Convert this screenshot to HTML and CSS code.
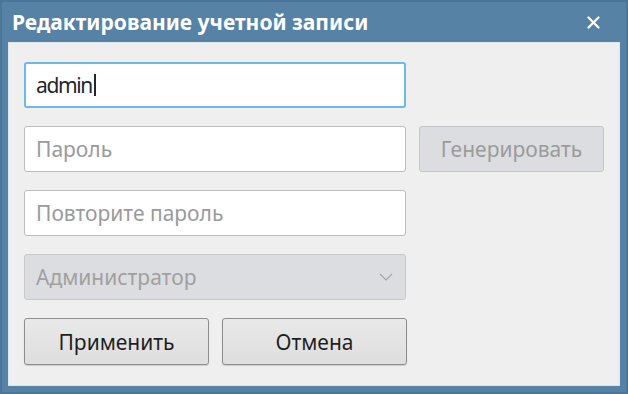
FILE: index.html
```html
<!DOCTYPE html>
<html lang="ru">
<head>
  <meta charset="UTF-8" />
  <meta name="viewport" content="width=device-width, initial-scale=1" />
  <title>Редактирование учетной записи</title>
  <link rel="stylesheet" href="styles.css">
</head>
<body>
  <div class="window">
    <div class="titlebar">
      <span class="title">Редактирование учетной записи</span>
      <svg class="close" width="13" height="13" viewBox="0 0 13 13"><path d="M1.5 1.5 L11.5 11.5 M11.5 1.5 L1.5 11.5" stroke="#fff" stroke-width="2.2" stroke-linecap="round"/></svg>
    </div>
    <div class="content">
      <div class="row">
        <div class="field focused"><span class="value">admin</span><span class="caret"></span></div>
      </div>
      <div class="row">
        <div class="field"><span class="placeholder">Пароль</span></div>
        <div class="button disabled">Генерировать</div>
      </div>
      <div class="row">
        <div class="field"><span class="placeholder">Повторите пароль</span></div>
      </div>
      <div class="row">
        <div class="combo disabled">
          <span>Администратор</span>
          <svg width="14" height="8" viewBox="0 0 14 8"><path d="M1 1 L7 7 L13 1" fill="none" stroke="#a4a4a4" stroke-width="1.2"/></svg>
        </div>
      </div>
      <div class="row buttons">
        <div class="button">Применить</div>
        <div class="button">Отмена</div>
      </div>
    </div>
  </div>
</body>
</html>
```

FILE: styles.css
```css
html, body {
  margin: 0;
  padding: 0;
}
body {
  width: 628px;
  height: 394px;
  overflow: hidden;
  font-family: "Noto Sans", "Open Sans", sans-serif;
}
.window {
  box-sizing: border-box;
  width: 628px;
  height: 394px;
  background: #5682a6;
  border: 2px solid #4b7699;
  padding: 0 6px 6px 6px;
  display: flex;
  flex-direction: column;
}
.titlebar {
  height: 40px;
  display: flex;
  align-items: center;
  justify-content: space-between;
  padding: 0 20px 0 4px;
  color: #fff;
}
.title {
  font-weight: bold;
  font-size: 21px;
}
.content {
  flex: 1;
  background: #efefef;
  border: 1px solid #dfe6ec;
  padding: 19px 14px 0 15px;
  display: flex;
  flex-direction: column;
  gap: 18px;
}
.row {
  display: flex;
  gap: 13px;
  height: 46px;
}
.field, .combo {
  box-sizing: border-box;
  width: 382px;
  height: 46px;
  background: #fff;
  border: 1px solid #bdbdbd;
  border-radius: 3px;
  display: flex;
  align-items: center;
  padding: 0 11px;
  font-size: 21px;
}
.field.focused {
  border: 2px solid #6cb9ea;
  padding: 0 10px;
}
.value {
  color: #232629;
  letter-spacing: -1.4px;
}
.caret {
  width: 2px;
  height: 22px;
  background: #232629;
  margin-left: 2px;
}
.placeholder {
  color: #9a9a9a;
}
.combo {
  justify-content: space-between;
  padding-right: 12px;
}
.combo.disabled {
  background: #dcdde0;
  border-color: #c8c9cb;
  color: #a0a0a0;
}
.button {
  box-sizing: border-box;
  width: 185px;
  height: 46px;
  border: 1px solid #8d8d8d;
  border-radius: 3px;
  background: linear-gradient(#e9e9e9, #dedede);
  display: flex;
  align-items: center;
  justify-content: center;
  font-size: 21px;
  color: #1f1f1f;
  box-shadow: 0 1px 1px rgba(0,0,0,0.15);
}
.button.disabled {
  background: #dcdde0;
  border-color: #c4c5c8;
  color: #9b9b9b;
  box-shadow: none;
}
.buttons {
  gap: 13px;
  height: 47px;
}
.buttons .button {
  height: 47px;
}
```
